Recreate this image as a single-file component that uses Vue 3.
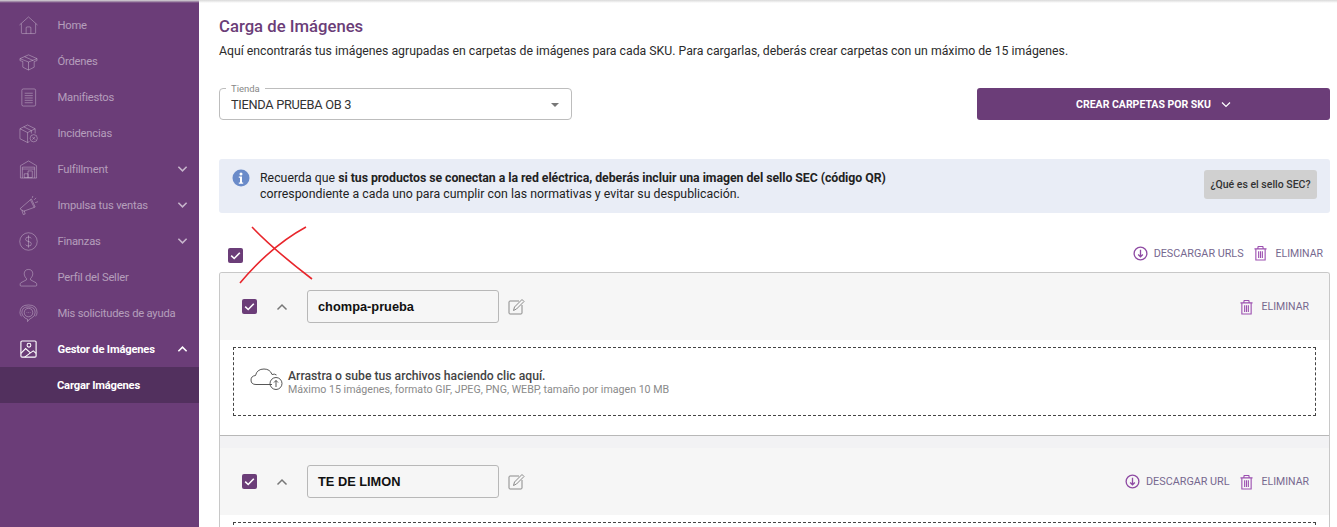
<script setup>
const items = [
  { label: 'Home', icon: 'home' },
  { label: 'Órdenes', icon: 'box' },
  { label: 'Manifiestos', icon: 'list' },
  { label: 'Incidencias', icon: 'issue' },
  { label: 'Fulfillment', icon: 'store', chev: 'down' },
  { label: 'Impulsa tus ventas', icon: 'mega', chev: 'down' },
  { label: 'Finanzas', icon: 'money', chev: 'down' },
  { label: 'Perfil del Seller', icon: 'user' },
  { label: 'Mis solicitudes de ayuda', icon: 'help' },
  { label: 'Gestor de Imágenes', icon: 'image', chev: 'up', active: true }
]
</script>

<template>
  <div class="page">
    <aside class="side">
      <div v-for="it in items" :key="it.label" class="nav" :class="{ active: it.active }">
        <svg class="nav-ic" viewBox="0 0 20 20" fill="none" stroke="currentColor" stroke-width="0.8">
          <template v-if="it.icon === 'home'">
            <path d="M0.5 9.5 10 1l9.5 8.5M2.5 8v9.5q0 1 1 1h13q1 0 1-1V8" /><path d="M7.5 18.5v-6q0-1 1-1h3q1 0 1 1v6" />
          </template>
          <template v-else-if="it.icon === 'box'">
            <path d="M1 7l9-4 9 4-9 3.5zM1 7v2l3 1v6l6 3 6-3v-6l3-1V7M10 10.5V19M6 5l9 4" />
          </template>
          <template v-else-if="it.icon === 'list'">
            <rect x="3" y="1" width="14.5" height="18" rx="1.5" /><path d="M6 5.5h8.5M6 8h8.5M6 10.5h8.5M6 13h8.5M6 15.500h8.5" />
          </template>
          <template v-else-if="it.icon === 'issue'">
            <path d="M1 5l8-4 8 4v5M1 5v10.500l8 4 2-1M1 5l8 4 8-4M9 9v10.500M5 3l8 4v3" /><circle cx="15.500" cy="15" r="3.800" /><path d="M14 13.500l3 3M17 13.500l-3 3" />
          </template>
          <template v-else-if="it.icon === 'store'">
            <path d="M1.500 19V6L10 1l8.500 5v13zM3.500 19V7.500h13V19M3.500 9.500h13" /><path d="M5.500 18.500v-4h4v4zM9.500 18.500v-7h4.500v7z" />
          </template>
          <template v-else-if="it.icon === 'mega'">
            <path d="M1 13.500 12 4l4 8-11 4zM3 15l1.500 4.500 2-.5-1-3.500M12 4l1-1 4 8.500-1 .5" /><path d="M16 4l2-2M17 7l3-1M14 2l.5-2" />
          </template>
          <template v-else-if="it.icon === 'money'">
            <circle cx="10" cy="10" r="9.200" /><path d="M13 6.800Q12 5.300 10 5.300 7 5.300 7 7.700 7 9.500 10 10t3 2.500q0 2.300-3 2.300-2 0-3-1.500M10 3.500v13" />
          </template>
          <template v-else-if="it.icon === 'user'">
            <path d="M10 1.500c-3 0-4.500 2-4.500 4.500 0 2 1 3.700 2.300 5v1.500L2 15.500q-1 .8-.8 2.500q0 1 1 1h15.500q1 0 1-1 .2-1.700-.8-2.500l-5.700-3V11c1.300-1.300 2.300-3 2.300-5 0-2.500-1.500-4.500-4.500-4.500z" />
          </template>
          <template v-else-if="it.icon === 'help'">
            <path d="M2.500 13Q1 11 1 9q0-8 9-8t9 8q0 2-1.500 4M4 12Q3 10.500 3 9q0-6 7-6t7 6q0 4-3.500 5.500L11 16l-2 2.500V16Q6 15.500 4 12z" /><circle cx="10" cy="9" r="4.500" /><path d="M8 9h.7M9.700 9h.7M11.400 9h.7" />
          </template>
          <template v-else>
            <rect x="2" y="1" width="16" height="17" rx="1.200" stroke-width="1.200" /><path d="M2 14l5-5 5 4.500 3-2 3 2.500M6 18l6-4.500" stroke-width="1.100" /><circle cx="10.500" cy="5.500" r="2" stroke-width="1.100" />
          </template>
        </svg>
        <span class="nav-label">{{ it.label }}</span>
        <svg v-if="it.chev" class="nav-chev" viewBox="0 0 12 8" fill="none" stroke="currentColor" stroke-width="1.700">
          <path :d="it.chev === 'down' ? 'M1.500 1.500 6 6l4.500-4.500' : 'M1.500 6.500 6 2l4.500 4.500'" />
        </svg>
      </div>
      <div class="sub">Cargar Imágenes</div>
    </aside>

    <main class="main">
      <h1 class="title">Carga de Imágenes</h1>
      <p class="lead">Aquí encontrarás tus imágenes agrupadas en carpetas de imágenes para cada SKU. Para cargarlas, deberás crear carpetas con un máximo de 15 imágenes.</p>

      <div class="controls">
        <div class="select">
          <span class="select-label">Tienda</span>
          <span>TIENDA PRUEBA OB 3</span>
          <i class="caret"></i>
        </div>
        <div class="primary">
          <span>CREAR CARPETAS POR SKU</span>
          <svg width="10" height="7" viewBox="0 0 10 7" fill="none" stroke="#fff" stroke-width="1.200"><path d="M1 1.500 5 5.500l4-4" /></svg>
        </div>
      </div>

      <div class="info">
        <svg class="info-ic" viewBox="0 0 18 18">
          <circle cx="9" cy="9" r="8.500" fill="#6a8bc9" />
          <circle cx="9" cy="5" r="1.500" fill="#fff" />
          <path d="M6.800 7.500h3.200v6h1.200v1.200H6.800v-1.200H8V8.700H6.800z" fill="#fff" />
        </svg>
        <div class="info-text">
          <div>Recuerda que <b>si tus productos se conectan a la red eléctrica, deberás incluir una imagen del sello SEC (código QR)</b></div>
          <div>correspondiente a cada uno para cumplir con las normativas y evitar su despublicación.</div>
        </div>
        <div class="sec">¿Qué es el sello SEC?</div>
      </div>

      <div class="bulk">
        <span class="check"><svg viewBox="0 0 15 15" fill="none" stroke="#fff" stroke-width="1.600"><path d="M3.200 7.700 6.200 10.500 11.800 4.800" /></svg></span>
        <svg class="scribble" viewBox="0 0 74 58" fill="none" stroke="#e8262c" stroke-width="1.600">
          <path d="M13 1Q35 24 73 53" /><path d="M67 1Q32 20 1 57" />
        </svg>
        <div class="actions">
          <svg class="act-ic" viewBox="0 0 16 16" fill="none" stroke="#8e4aa3" stroke-width="1.400"><circle cx="8" cy="8" r="6.800" /><path d="M8 4v7.500M5.500 9 8 11.500 10.500 9" /></svg>
          <span class="act-text">DESCARGAR URLS</span>
          <svg class="trash" viewBox="0 0 14 16" fill="none" stroke="#9c50b0" stroke-width="1.200"><path d="M.5 3.500h13M4 3.500l.5-2.500h5l.5 2.500M2 3.500V15.500h10V3.500M5 6v7.500M7 6v7.500M9 6v7.500" /></svg>
          <span class="act-text elim">ELIMINAR</span>
        </div>
      </div>

      <section class="card">
        <div class="head">
          <span class="check"><svg viewBox="0 0 15 15" fill="none" stroke="#fff" stroke-width="1.600"><path d="M3.200 7.700 6.200 10.500 11.800 4.800" /></svg></span>
          <svg class="up" viewBox="0 0 12 8" fill="none" stroke="#777" stroke-width="1.500"><path d="M1.500 6.500 6 2l4.500 4.500" /></svg>
          <div class="name">chompa-prueba</div>
          <svg class="edit" viewBox="0 0 17 17" fill="none" stroke="#8a8a8a" stroke-width="1"><path d="M11 3H2q-1 0-1 1v11q0 1 1 1h11q1 0 1-1V7" /><path d="M5.500 12.500 6.500 9 14 1.500l2 2L8.500 11z" /></svg>
          <div class="actions">
            <svg class="trash" viewBox="0 0 14 16" fill="none" stroke="#9c50b0" stroke-width="1.200"><path d="M.5 3.500h13M4 3.500l.5-2.500h5l.5 2.500M2 3.500V15.500h10V3.500M5 6v7.500M7 6v7.500M9 6v7.500" /></svg>
            <span class="act-text elim">ELIMINAR</span>
          </div>
        </div>
        <div class="body">
          <div class="drop">
            <svg class="cloud" viewBox="0 0 33 24" fill="none" stroke="#444" stroke-width="0.900">
              <path d="M22 16.500H6Q1 16.500 1 12q0-4 4.500-4.500Q7 1 14 1q6 0 8 5.500 2.500-1 4.500.5" />
              <circle cx="26" cy="15.500" r="6" /><path d="M26 19v-6.500M24 14.500l2-2 2 2" />
            </svg>
            <div>
              <div class="drop-a">Arrastra o sube tus archivos haciendo clic aquí.</div>
              <div class="drop-b">Máximo 15 imágenes, formato GIF, JPEG, PNG, WEBP, tamaño por imagen 10 MB</div>
            </div>
          </div>
        </div>
        <div class="strip"></div>
        <div class="head">
          <span class="check"><svg viewBox="0 0 15 15" fill="none" stroke="#fff" stroke-width="1.600"><path d="M3.200 7.700 6.200 10.500 11.800 4.800" /></svg></span>
          <svg class="up" viewBox="0 0 12 8" fill="none" stroke="#777" stroke-width="1.500"><path d="M1.500 6.500 6 2l4.500 4.500" /></svg>
          <div class="name">TE DE LIMON</div>
          <svg class="edit" viewBox="0 0 17 17" fill="none" stroke="#8a8a8a" stroke-width="1"><path d="M11 3H2q-1 0-1 1v11q0 1 1 1h11q1 0 1-1V7" /><path d="M5.500 12.500 6.500 9 14 1.500l2 2L8.500 11z" /></svg>
          <div class="actions">
            <svg class="act-ic" viewBox="0 0 16 16" fill="none" stroke="#8e4aa3" stroke-width="1.400"><circle cx="8" cy="8" r="6.800" /><path d="M8 4v7.500M5.500 9 8 11.500 10.500 9" /></svg>
            <span class="act-text">DESCARGAR URL</span>
            <svg class="trash" viewBox="0 0 14 16" fill="none" stroke="#9c50b0" stroke-width="1.200"><path d="M.5 3.500h13M4 3.500l.5-2.500h5l.5 2.500M2 3.500V15.500h10V3.500M5 6v7.500M7 6v7.500M9 6v7.500" /></svg>
            <span class="act-text elim">ELIMINAR</span>
          </div>
        </div>
        <div class="body">
          <div class="drop"></div>
        </div>
      </section>
    </main>
  </div>
</template>

<style scoped>
.page { display: flex; height: 527px; overflow: hidden; font-family: Roboto, "Liberation Sans", sans-serif; color: #222; background: #fff; position: relative; }
.page::before { content: ""; position: absolute; left: 0; right: 0; top: 0; height: 3px; background: linear-gradient(#d9d9d9, rgba(255,255,255,0)); z-index: 2; }
.side { width: 199px; flex: none; background: #6b3d78; padding-top: 7px; }
.nav { height: 36px; display: flex; align-items: center; padding-left: 19px; color: rgba(255,255,255,.42); font-size: 11.200px; letter-spacing: -.2px; }
.nav-ic { width: 19px; height: 19px; flex: none; }
.nav-label { margin-left: 19.500px; color: rgba(255,255,255,.5); }
.nav-chev { width: 11px; height: 8px; margin-left: auto; margin-right: 11px; color: rgba(255,255,255,.62); }
.nav.active { color: #fff; }
.nav.active .nav-label { color: #fff; font-weight: 700; }
.nav.active .nav-chev { color: #fff; }
.sub { height: 36px; background: #52305e; color: #fff; font-weight: 700; font-size: 11.200px; letter-spacing: -.2px; display: flex; align-items: center; padding-left: 57px; }
.main { flex: 1; min-width: 0; padding: 17px 7px 0 20px; }
.title { margin: 0; font-size: 16.700px; line-height: 20px; font-weight: 500; color: #6b3d78; }
.lead { margin: 5px 0 0; font-size: 12.280px; line-height: 18px; color: #2b2b2b; white-space: nowrap; }
.controls { display: flex; justify-content: space-between; margin-top: 28px; }
.select { position: relative; box-sizing: border-box; width: 353px; height: 32px; border: 1px solid #bdbdbd; border-radius: 4px; display: flex; align-items: center; padding-left: 11px; font-size: 12.800px; letter-spacing: -.3px; color: #333; }
.select-label { position: absolute; left: 6px; top: -6px; padding: 0 5px; background: #fff; font-size: 9.500px; letter-spacing: 0; line-height: 11px; color: #888; }
.caret { position: absolute; right: 12px; top: 14px; border: 4px solid transparent; border-top-color: #777; border-bottom: 0; }
.primary { width: 353px; height: 32px; background: #6b3d78; border-radius: 3px; color: #fff; display: flex; align-items: center; justify-content: center; gap: 10px; font-size: 10.500px; font-weight: 700; }
.info { margin-top: 39px; height: 54px; box-sizing: border-box; background: #e9edf6; border-radius: 3px; display: flex; padding: 11px 13px 0 13px; }
.info-ic { width: 18px; height: 18px; flex: none; margin-top: -1px; }
.info-text { margin-left: 10px; font-size: 12.300px; line-height: 16px; letter-spacing: .025px; color: #222; white-space: nowrap; }
.info-text b { font-weight: 700; letter-spacing: -.045px; }
.sec { margin-left: auto; width: 113px; height: 29px; background: #d0d0d0; border-radius: 3px; display: flex; align-items: center; justify-content: center; font-size: 10.500px; font-weight: 500; color: #333; }
.bulk { position: relative; box-sizing: border-box; height: 59px; padding: 21px 7px 0 9px; display: flex; align-items: center; }
.bulk > .check { margin-top: 4px; }
.scribble { position: absolute; left: 20px; top: 13px; width: 74px; height: 58px; z-index: 3; overflow: visible; }
.check { width: 15px; height: 15px; background: #6b3d78; border-radius: 2px; display: block; flex: none; }
.check svg { display: block; }
.actions { margin-left: auto; display: flex; align-items: center; }
.act-ic { width: 15px; height: 15px; }
.act-text { font-size: 10.800px; color: #76688f; margin-left: 6px; white-space: nowrap; }
.trash { width: 13px; height: 16px; margin-left: 10px; }
.elim { margin-left: 9px; font-size: 10.500px; }
.card { border: 1px solid #c8c8c8; border-bottom: 0; border-radius: 3px 3px 0 0; height: 300px; overflow: hidden; }
.head { height: 67px; background: #f6f6f6; display: flex; align-items: center; padding: 0 20px 0 22px; }
.up { width: 12px; height: 8px; margin-left: 19px; }
.name { box-sizing: border-box; margin-left: 19px; width: 192px; height: 33px; border: 1px solid #b8b8b8; border-radius: 3px; padding-left: 10px; display: flex; align-items: center; font-family: "Liberation Sans", sans-serif; font-weight: 700; font-size: 12.800px; color: #111; }
.edit { width: 17px; height: 17px; margin-left: 9px; }
.body { background: #fff; padding: 7px 13px 0; height: 88px; border-bottom: 1px solid #b8b8b8; }
.drop { box-sizing: border-box; height: 69px; border: 1px dashed #444; display: flex; align-items: center; padding: 2px 0 0 16px; }
.cloud { width: 33px; height: 24px; margin-right: 5px; flex: none; margin-top: -5px; }
.drop-a { font-size: 12.200px; line-height: 14px; font-weight: 500; color: #444; }
.drop-b { font-size: 10.650px; line-height: 14px; color: #8a8a8a; }
.strip { height: 12px; background: #f2f2f4; }
.card > .body:last-child { border-bottom: 0; }
</style>

<style>
html, body { margin: 0; overflow: hidden; }
</style>
